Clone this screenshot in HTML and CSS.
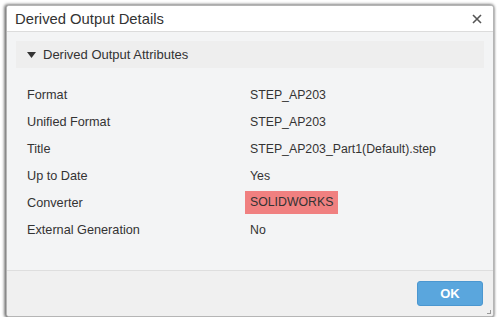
FILE: index.html
```html
<!DOCTYPE html>
<html>
<head>
<meta charset="utf-8">
<link rel="stylesheet" href="styles.css">
</head>
<body>
<div class="dialog">
  <div class="titlebar">
    <span class="title">Derived Output Details</span>
    <svg class="close" width="10" height="10" viewBox="0 0 10 10"><path d="M1 1L9 9M9 1L1 9" stroke="#555" stroke-width="1.6"/></svg>
  </div>
  <div class="content">
    <div class="section-header">
      <svg class="caret" width="9" height="6" viewBox="0 0 9 6"><path d="M0 0H9L4.5 6Z" fill="#333"/></svg>
      <span>Derived Output Attributes</span>
    </div>
    <div class="attrs">
      <div class="label">Format</div><div class="value">STEP_AP203</div>
      <div class="label">Unified Format</div><div class="value">STEP_AP203</div>
      <div class="label">Title</div><div class="value">STEP_AP203_Part1(Default).step</div>
      <div class="label">Up to Date</div><div class="value">Yes</div>
      <div class="label">Converter</div><div class="value"><span class="hl">SOLIDWORKS</span></div>
      <div class="label">External Generation</div><div class="value">No</div>
    </div>
  </div>
  <div class="footer">
    <button class="ok">OK</button>
    <span class="grip"></span>
  </div>
</div>
</body>
</html>
```
FILE: styles.css
```css
html, body { margin: 0; padding: 0; background: #ffffff; }
body { font-family: "Liberation Sans", Arial, sans-serif; color: #333; font-size: 13px; }
.dialog {
  position: relative;
  margin: 5px 0 0 6px;
  width: 488px;
  height: 312px;
  border: 1px solid #b5b5b5;
  border-radius: 3px;
  box-shadow: -1px 0 3px 1px rgba(0,0,0,0.45), 0 1px 3px rgba(0,0,0,0.35);
  display: flex;
  flex-direction: column;
  background: #f3f4f5;
  overflow: hidden;
  box-sizing: border-box;
}
.titlebar {
  height: 25px;
  flex: none;
  background: #fff;
  border-bottom: 1px solid #dcdcdc;
  display: flex;
  align-items: center;
  justify-content: space-between;
  padding: 0 11px 0 8px;
}
.title { font-size: 14.8px; color: #333; }
.close { display: block; margin-top: 1px; }
.content { flex: 1; padding: 9px 9px 0 9px; }
.section-header {
  height: 27px;
  background: #eeeeee;
  display: flex;
  align-items: center;
  padding-left: 11px;
  font-size: 13px;
}
.caret { margin-right: 7px; }
.attrs {
  display: grid;
  grid-template-columns: 223px 1fr;
  grid-auto-rows: 27px;
  margin-top: 13px;
  padding-left: 11px;
  align-items: center;
}
.label { font-size: 12.7px; }
.value { font-size: 12.3px; }
.hl {
  display: inline-block;
  background: #f08080;
  margin-left: -5px;
  padding: 0 5px;
  line-height: 23px;
}
.footer {
  height: 46px;
  flex: none;
  background: #f0f0f0;
  border-top: 1px solid #dedede;
  display: flex;
  justify-content: flex-end;
  align-items: flex-start;
  padding: 10px 10px 0 0;
  box-sizing: border-box;
  position: relative;
}
.ok {
  width: 66px;
  height: 25px;
  background: #5aa6dd;
  border: 1px solid #4b97d0;
  border-radius: 3px;
  color: #fff;
  font-family: "Liberation Sans", Arial, sans-serif;
  font-weight: bold;
  font-size: 13px;
  padding: 0;
}
.grip {
  position: absolute;
  right: 2px;
  bottom: 2px;
  width: 3px;
  height: 3px;
  border-right: 1px solid #999;
  border-bottom: 1px solid #999;
}
```
